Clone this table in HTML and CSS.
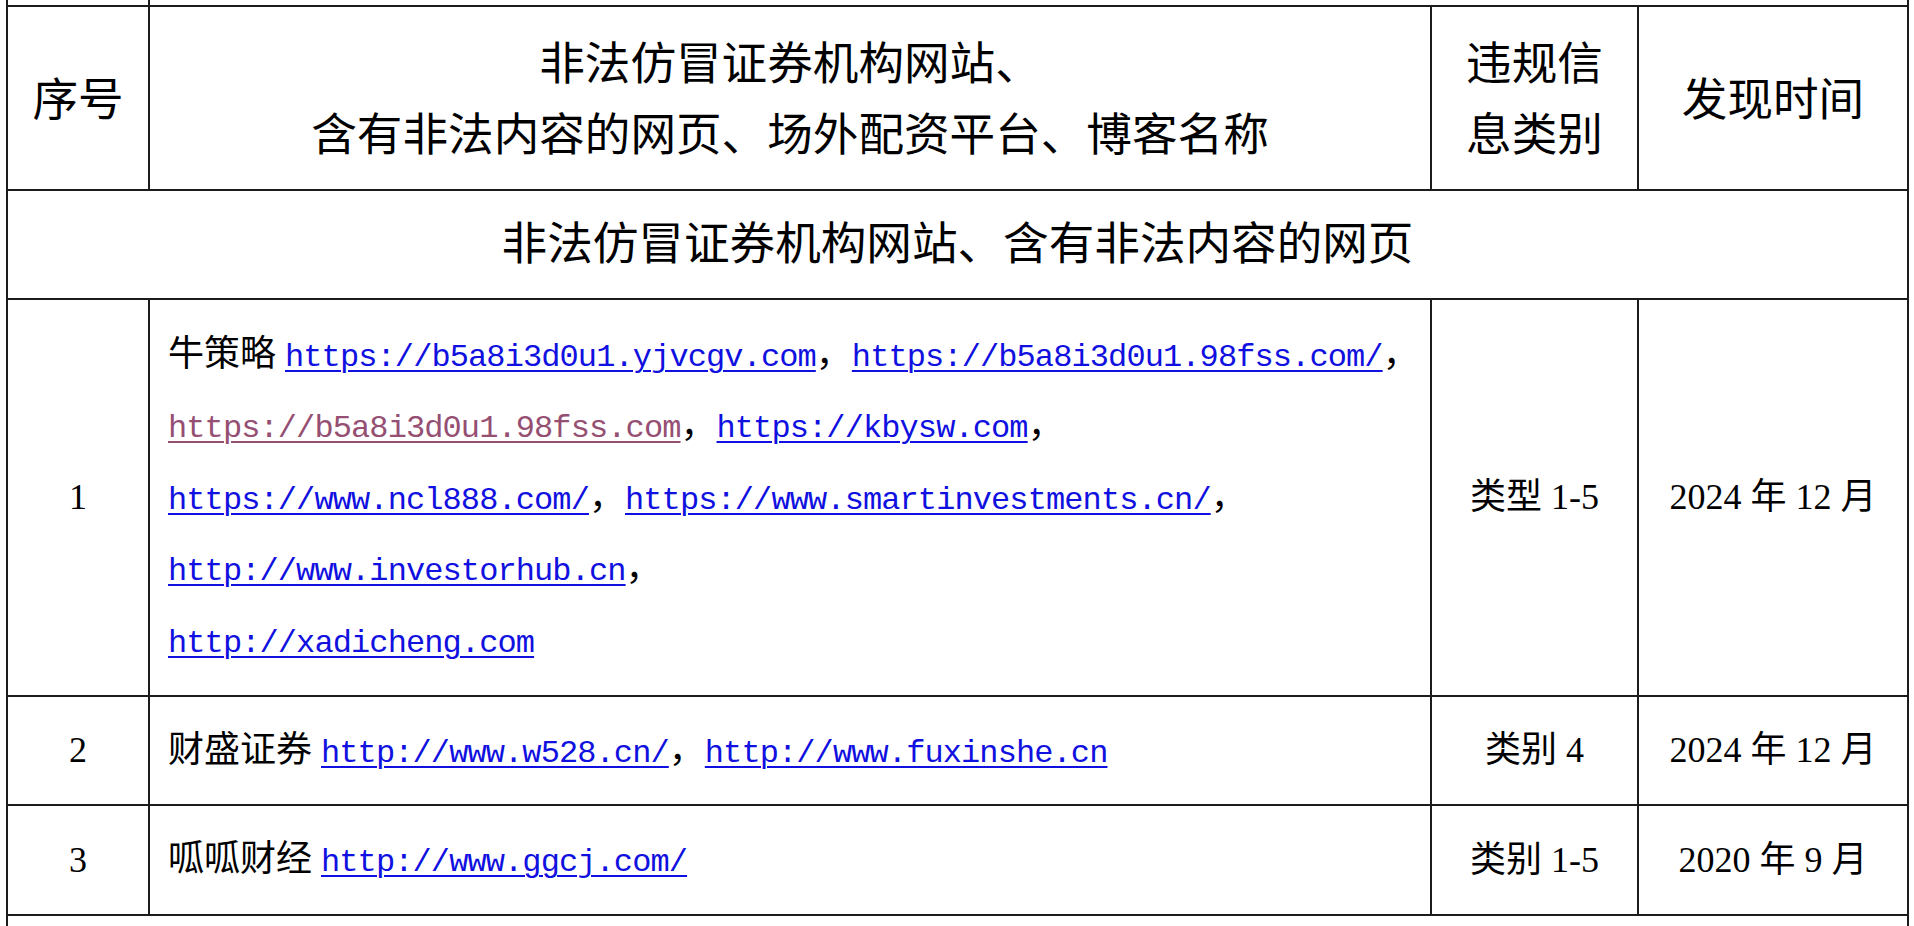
FILE: index.html
```html
<!DOCTYPE html>
<html lang="zh-CN">
<head>
    <meta charset="UTF-8">
    <title>非法仿冒证券机构网站名单</title>
    <link rel="stylesheet" href="styles.css">
</head>
<body>
    <div class="sheet">
        <table class="notice">
            <colgroup>
                <col class="c-no">
                <col class="c-name">
                <col class="c-type">
                <col class="c-date">
            </colgroup>
            <tr class="stub">
                <td></td>
                <td colspan="3"></td>
            </tr>
            <tr class="head">
                <th>序号</th>
                <th>非法仿冒证券机构网站、<br>含有非法内容的网页、场外配资平台、博客名称</th>
                <th>违规信<br>息类别</th>
                <th>发现时间</th>
            </tr>
            <tr class="section">
                <td colspan="4">非法仿冒证券机构网站、含有非法内容的网页</td>
            </tr>
            <tr class="item big">
                <td class="no">1</td>
                <td class="name">
                    <div class="line">牛策略 <a href="https://b5a8i3d0u1.yjvcgv.com">https://b5a8i3d0u1.yjvcgv.com</a>，<a href="https://b5a8i3d0u1.98fss.com/">https://b5a8i3d0u1.98fss.com/</a>，</div>
                    <div class="line"><a class="seen" href="https://b5a8i3d0u1.98fss.com">https://b5a8i3d0u1.98fss.com</a>，<a href="https://kbysw.com">https://kbysw.com</a>，</div>
                    <div class="line"><a href="https://www.ncl888.com/">https://www.ncl888.com/</a>，<a href="https://www.smartinvestments.cn/">https://www.smartinvestments.cn/</a>，</div>
                    <div class="line"><a href="http://www.investorhub.cn">http://www.investorhub.cn</a>，</div>
                    <div class="line"><a href="http://xadicheng.com">http://xadicheng.com</a></div>
                </td>
                <td class="type">类型 1-5</td>
                <td class="date">2024 年 12 月</td>
            </tr>
            <tr class="item">
                <td class="no">2</td>
                <td class="name">
                    <div class="line">财盛证券 <a href="http://www.w528.cn/">http://www.w528.cn/</a>，<a href="http://www.fuxinshe.cn">http://www.fuxinshe.cn</a></div>
                </td>
                <td class="type">类别 4</td>
                <td class="date">2024 年 12 月</td>
            </tr>
            <tr class="item last">
                <td class="no">3</td>
                <td class="name">
                    <div class="line">呱呱财经 <a href="http://www.ggcj.com/">http://www.ggcj.com/</a></div>
                </td>
                <td class="type">类别 1-5</td>
                <td class="date">2020 年 9 月</td>
            </tr>
            <tr class="tail">
                <td colspan="4"></td>
            </tr>
        </table>
    </div>
</body>
</html>
```

FILE: styles.css
```css
body {
    margin: 0;
    background: #ffffff;
    color: #000000;
    font-family: "Liberation Serif", "Noto Sans CJK SC", serif;
}

.sheet {
    padding-left: 6px;
}

.notice {
    border-collapse: collapse;
    table-layout: fixed;
    width: 1903px;
}

.c-no {
    width: 142px;
}

.c-name {
    width: 1282px;
}

.c-type {
    width: 207px;
}

.c-date {
    width: 270px;
}

.notice th,
.notice td {
    border: 2px solid #1c1c1c;
    padding: 0;
    text-align: center;
    vertical-align: middle;
}

.stub td {
    height: 5px;
    border-top: none;
}

.head th {
    height: 178px;
    font-weight: normal;
    font-size: 45.6px;
    line-height: 71px;
    padding-top: 4px;
}

.section td {
    height: 107px;
    font-size: 45.6px;
    line-height: 60px;
}

.item td {
    height: 107px;
    font-size: 36px;
    line-height: 71px;
}

.item.big td {
    height: 395px;
}

.item.last td {
    height: 108px;
}

.item .name {
    text-align: left;
    padding-left: 18px;
}

.line {
    white-space: nowrap;
    height: 71.4px;
    line-height: 71.4px;
}

.line a {
    font-family: "Liberation Mono", monospace;
    font-size: 32px;
    line-height: 1;
    letter-spacing: -0.9px;
    color: #1010e0;
    text-decoration: underline;
    text-decoration-thickness: 2px;
    text-underline-offset: 4px;
}

.line a.seen {
    color: #954f72;
}

.tail td {
    height: 20px;
    border-bottom: none;
}
```
